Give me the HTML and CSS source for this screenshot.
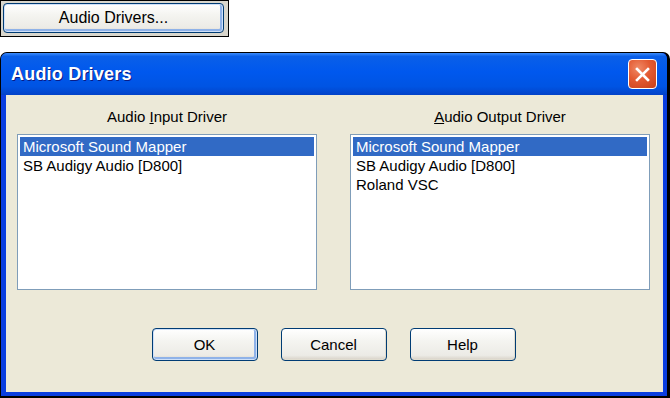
FILE: index.html
```html
<!DOCTYPE html>
<html lang="en">
<head>
  <meta charset="UTF-8">
  <title>Audio Drivers</title>
  <link rel="stylesheet" href="styles.css">
</head>
<body>
  <!-- pulsante che apre il dialogo -->
  <div class="launcher">
    <button class="xp-btn launcher-btn">Audio Drivers...</button>
  </div>

  <div class="window">
    <div class="titlebar">
      <span class="title">Audio Drivers</span>
      <span class="close">
        <svg width="15" height="15" viewBox="0 0 15 15">
          <path d="M2 2 L13 13 M13 2 L2 13" stroke="#fff" stroke-width="2.6" stroke-linecap="square"/>
        </svg>
      </span>
    </div>

    <div class="client">
      <div class="columns">
        <div class="col">
          <div class="label">Audio <u>I</u>nput Driver</div>
          <ul class="listbox">
            <li class="sel">Microsoft Sound Mapper</li>
            <li>SB Audigy Audio [D800]</li>
          </ul>
        </div>
        <div class="col">
          <div class="label"><u>A</u>udio Output Driver</div>
          <ul class="listbox">
            <li class="sel">Microsoft Sound Mapper</li>
            <li>SB Audigy Audio [D800]</li>
            <li>Roland VSC</li>
          </ul>
        </div>
      </div>

      <div class="buttons">
        <button class="xp-btn default">OK</button>
        <button class="xp-btn">Cancel</button>
        <button class="xp-btn">Help</button>
      </div>
    </div>
  </div>
</body>
</html>
```

FILE: styles.css
```css
/* Reset */
* {
  margin: 0;
  padding: 0;
  box-sizing: border-box;
}

body {
  width: 670px;
  height: 398px;
  overflow: hidden;
  background: #fff;
  font-family: 'Liberation Sans', Arial, sans-serif;
  color: #000;
}

/* Pulsante in alto */
.launcher {
  width: 229px;
  height: 37px;
  border: 1px solid #000;
  background: #d9d6cc;
  padding: 2px 4px 3px 2px;
}

.xp-btn {
  font-family: 'Liberation Sans', Arial, sans-serif;
  font-size: 15px;
  color: #000;
  border: 1px solid #003c74;
  border-radius: 4px;
  background: linear-gradient(to bottom, #ffffff 0%, #f4f4f0 40%, #ecebe6 85%, #d6d0c5 100%);
  box-shadow: inset -1px -1px 0 #e0dccf;
  cursor: pointer;
}

.launcher-btn {
  width: 100%;
  height: 100%;
  font-size: 16px;
  box-shadow: inset 0 0 0 1px #cfe0f8, inset -1px -1px 0 2px #8fb2e8;
}

/* Finestra */
.window {
  margin-top: 15px;
  height: 346px;
  border: 1px solid #000;
  border-right-width: 3px;
  border-bottom-width: 2px;
  border-radius: 7px 7px 0 0;
  background: #0a3ee0;
  padding: 0 4px 4px 5px;
  display: flex;
  flex-direction: column;
}

.titlebar {
  height: 42px;
  margin: 0 -4px 0 -5px;
  border-radius: 6px 6px 0 0;
  background: linear-gradient(to bottom, #3d8dfb 0%, #0a5fe8 8%, #0058ee 45%, #0054e3 80%, #0342c8 100%);
  display: flex;
  align-items: center;
  justify-content: space-between;
  padding: 0 10px 0 10px;
}

.title {
  color: #fff;
  font-size: 18px;
  font-weight: bold;
  text-shadow: 1px 1px 0 #0a1c86;
  letter-spacing: 0.2px;
}

.close {
  width: 29px;
  height: 30px;
  border: 1px solid #fff;
  border-radius: 4px;
  background: radial-gradient(circle at 35% 30%, #f08a66 0%, #e35a32 45%, #c7401a 100%);
  display: flex;
  align-items: center;
  justify-content: center;
}

.client {
  flex: 1;
  background: #ece9d8;
  padding: 13px 13px 0 11px;
}

.columns {
  display: flex;
  gap: 33px;
}

.col {
  width: 300px;
}

.label {
  font-size: 15px;
  line-height: 18px;
  text-align: center;
  margin-bottom: 8px;
}

.listbox {
  list-style: none;
  height: 156px;
  background: #fff;
  border: 1px solid #7f9db9;
  padding: 2px;
  font-size: 15px;
}

.listbox li {
  line-height: 19px;
  padding-left: 3px;
}

.listbox li.sel {
  background: #316ac5;
  color: #fff;
}

/* Pulsanti in basso */
.buttons {
  display: flex;
  justify-content: center;
  gap: 23px;
  margin-top: 38px;
}

.buttons .xp-btn {
  width: 106px;
  height: 33px;
}

.buttons .default {
  box-shadow: inset 0 0 0 1px #cfe0f8, inset -1px -1px 0 2px #8fb2e8;
}
```
